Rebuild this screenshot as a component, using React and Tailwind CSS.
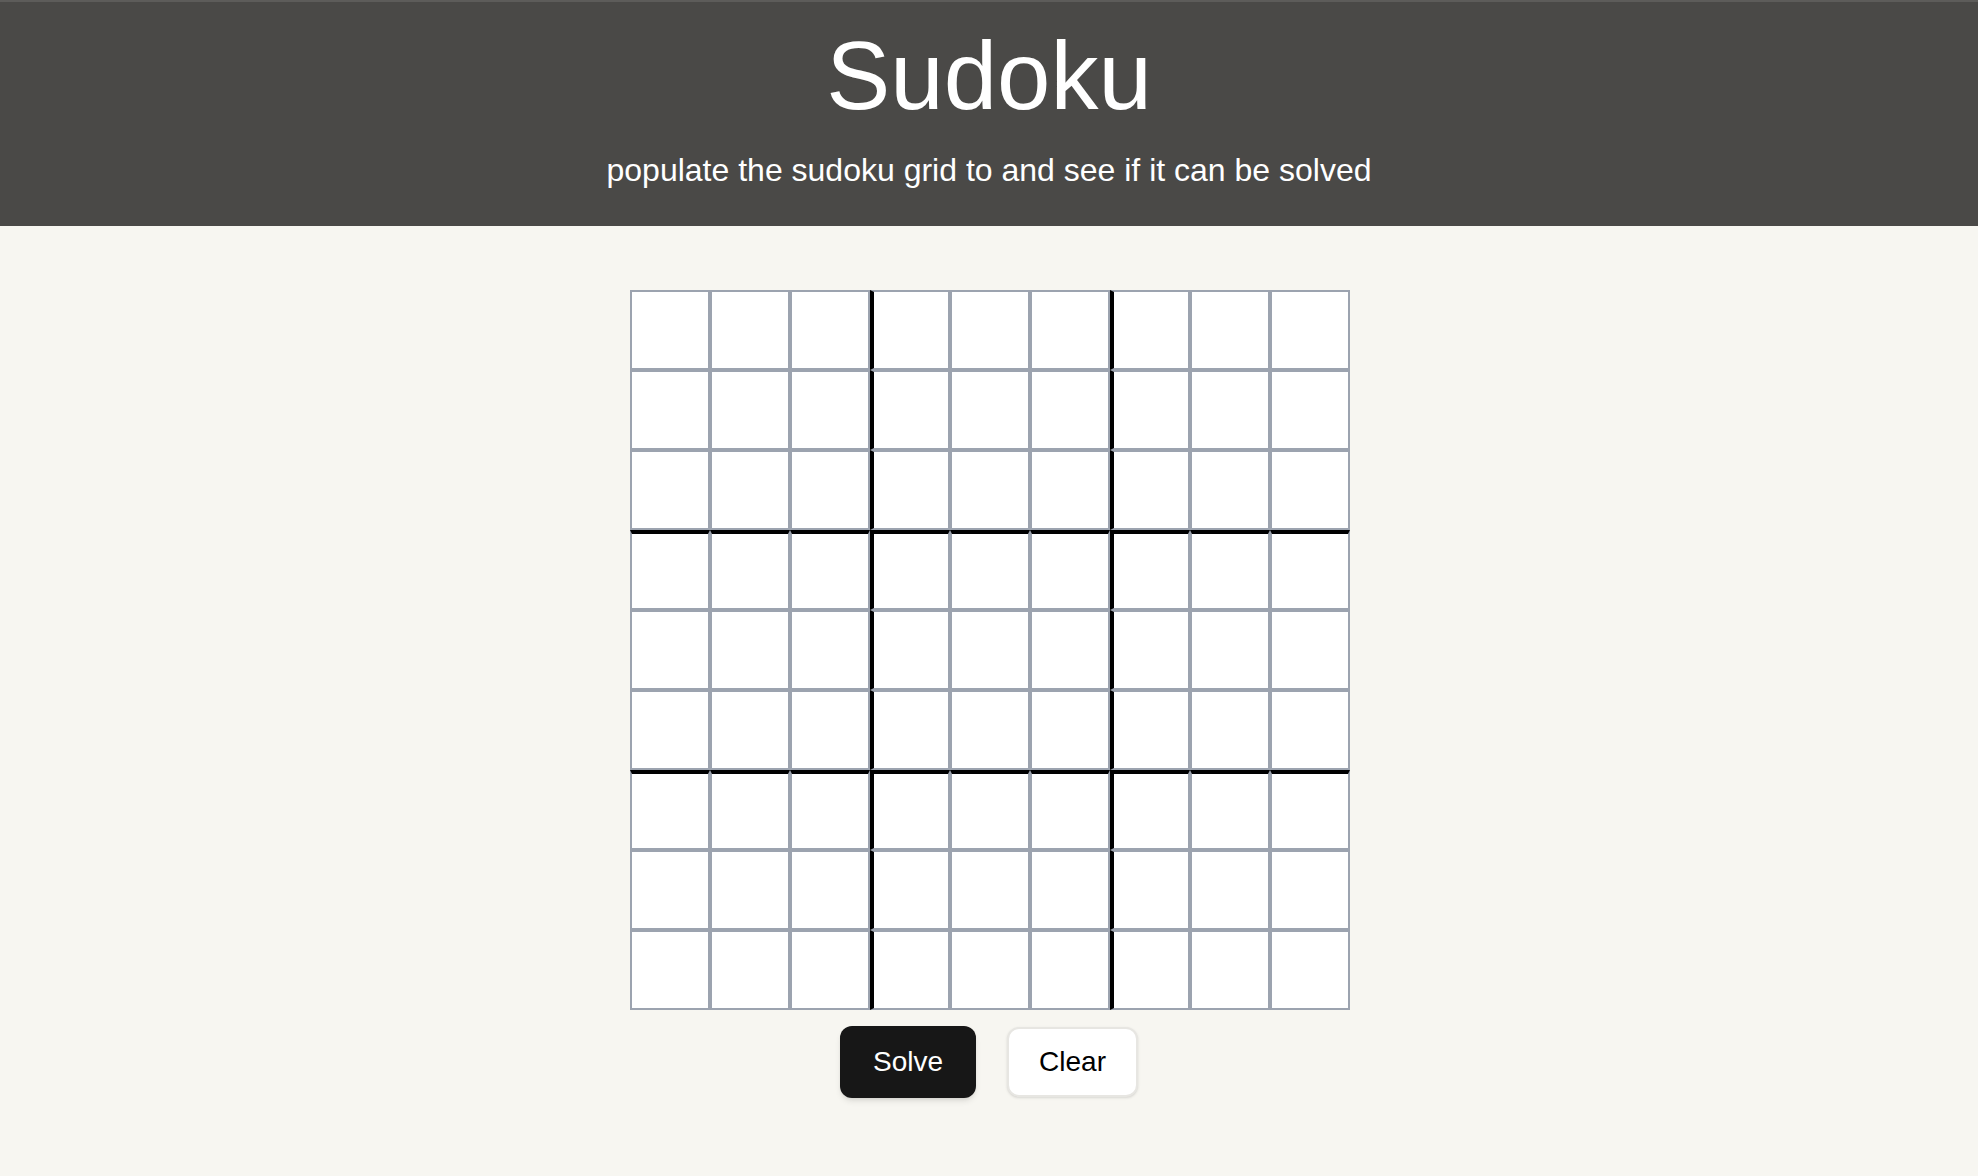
import React, { useState } from "react";

export default function App() {
  const [grid, setGrid] = useState(() => Array(81).fill(""));

  const update = (i, v) => {
    const val = v.replace(/[^1-9]/g, "").slice(-1);
    setGrid((g) => {
      const n = g.slice();
      n[i] = val;
      return n;
    });
  };

  return (
    <div
      className="min-h-screen bg-[#f7f6f1]"
      style={{ fontFamily: '"Liberation Sans", Arial, sans-serif' }}
    >
      <header className="bg-[#4a4947] border-t-2 border-[#5d5c5a] pt-[26px] pb-[32px] text-center text-white">
        <h1 className="text-[96px] leading-[96px] font-normal">Sudoku</h1>
        <p className="mt-[22px] text-[32px] leading-[48px]">
          populate the sudoku grid to and see if it can be solved
        </p>
      </header>

      <main className="flex flex-col items-center pt-[64px]">
        <div className="grid grid-cols-9 w-[720px] ml-[2px]">
          {grid.map((v, i) => {
            const r = Math.floor(i / 9);
            const c = i % 9;
            const thickL = c === 3 || c === 6;
            const thickT = r === 3 || r === 6;
            return (
              <input
                key={i}
                value={v}
                onChange={(e) => update(i, e.target.value)}
                inputMode="numeric"
                className={
                  "w-[80px] h-[80px] bg-white border-2 border-[#9ca3af] text-center text-[36px] text-black outline-none " +
                  (thickL ? "border-l-4 border-l-black " : "") +
                  (thickT ? "border-t-4 border-t-black " : "")
                }
              />
            );
          })}
        </div>

        <div className="flex gap-[31px] mt-[16px]">
          <button className="h-[72px] px-[33px] rounded-[12px] bg-[#171717] text-white text-[28px] leading-[40px] shadow-md">
            Solve
          </button>
          <button className="h-[70px] mt-[1px] px-[30px] rounded-[12px] bg-white text-black text-[28px] leading-[40px] border-2 border-[#e7e6e2] shadow-sm">
            Clear
          </button>
        </div>
      </main>
    </div>
  );
}
